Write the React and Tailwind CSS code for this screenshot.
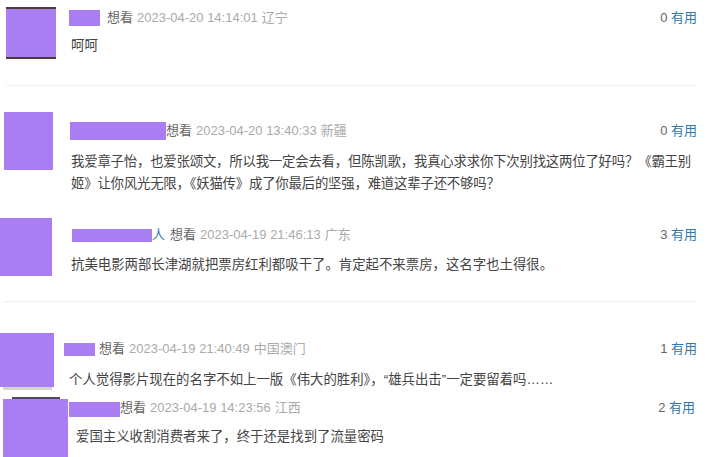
import React from "react";

const font = { fontFamily: '"Liberation Sans", "Noto Sans CJK SC", sans-serif' };

function Count({ n }) {
  return (
    <span className="text-[13px] leading-[20px] whitespace-nowrap">
      <span className="text-[#666]">{n}</span> <span className="text-[#3377aa]">有用</span>
    </span>
  );
}

function Meta({ date, loc }) {
  return (
    <>
      <span className="text-[#666]">想看</span>
      <span className="ml-[4px] text-[#aaa]">{date}</span>
      <span className="ml-[4px] text-[#aaa]">{loc}</span>
    </>
  );
}

export default function App() {
  return (
    <div className="w-[718px] h-[457px] bg-white overflow-hidden" style={font}>
      {/* Block 1 */}
      <div className="h-[105px] pt-[7px]">
        <div className="flex pl-[6px]">
          <div className="w-[50px] h-[52px] bg-[#a97ef2] border-t-2 border-b-2 border-[#4b3b3b] shrink-0" />
          <div className="ml-[13px] w-[628px] pt-[1px]">
            <div className="flex items-center justify-between text-[13px] leading-[20px]">
              <div className="flex items-center">
                <span className="w-[31px] h-[16px] bg-[#a97ef2] mr-[7px]" />
                <Meta date="2023-04-20 14:14:01" loc="辽宁" />
              </div>
              <Count n="0" />
            </div>
            <div className="mt-[8px] text-[13.4px] leading-[20px] text-[#444] pl-[2px]">呵呵</div>
          </div>
        </div>
        <div className="mt-[26px] ml-[6px] w-[691px] h-[1px] bg-[#efefef]" />
      </div>

      {/* Block 2 */}
      <div className="h-[105px] pt-[7px]">
        <div className="flex pl-[4px]">
          <div className="w-[49px] h-[58px] bg-[#a97ef2] shrink-0" />
          <div className="ml-[17px] w-[627px] pt-[9px]">
            <div className="flex items-center justify-between text-[13px] leading-[20px]">
              <div className="flex items-center">
                <span className="w-[96px] h-[18px] bg-[#a97ef2]" />
                <Meta date="2023-04-20 13:40:33" loc="新疆" />
              </div>
              <Count n="0" />
            </div>
            <div className="mt-[10px] text-[13.4px] leading-[22px] tracking-[-0.2px] text-[#444] pl-[1px] whitespace-nowrap">
              我爱章子怡，也爱张颂文，所以我一定会去看，但陈凯歌，我真心求求你下次别找这两位了好吗？《霸王别
              <br />
              姬》让你风光无限，《妖猫传》成了你最后的坚强，难道这辈子还不够吗？
            </div>
          </div>
        </div>
      </div>

      {/* Block 3 */}
      <div className="h-[110px] pt-[8px]">
        <div className="flex">
          <div className="w-[52px] h-[58px] bg-[#a97ef2] shrink-0" />
          <div className="ml-[16px] w-[629px] pt-[7px]">
            <div className="flex items-center justify-between text-[13px] leading-[20px]">
              <div className="flex items-center">
                <span className="ml-[4px] w-[80px] h-[13px] bg-[#a97ef2]" />
                <span className="text-[#3377aa] mr-[5px]">人</span>
                <Meta date="2023-04-19 21:46:13" loc="广东" />
              </div>
              <Count n="3" />
            </div>
            <div className="mt-[10px] text-[13.4px] leading-[20px] text-[#444] pl-[3px]">
              抗美电影两部长津湖就把票房红利都吸干了。肯定起不来票房，这名字也土得很。
            </div>
          </div>
        </div>
        <div className="mt-[25px] ml-[3px] w-[694px] h-[1px] bg-[#efefef]" />
      </div>

      {/* Block 4 */}
      <div className="h-[77px] pt-[13px]">
        <div className="flex">
          <div className="shrink-0">
            <div className="w-[54px] h-[54px] bg-[#a97ef2]" />
            <div className="ml-[3px] w-[49px] h-[3px] bg-[#d4d4d4]" />
          </div>
          <div className="ml-[10px] w-[633px] pt-[6px]">
            <div className="flex items-center justify-between text-[13px] leading-[20px]">
              <div className="flex items-center">
                <span className="w-[31px] h-[13px] bg-[#a97ef2] mr-[4px]" />
                <Meta date="2023-04-19 21:40:49" loc="中国澳门" />
              </div>
              <Count n="1" />
            </div>
            <div className="mt-[11px] text-[13.4px] leading-[20px] text-[#444] pl-[5px]">
              个人觉得影片现在的名字不如上一版《伟大的胜利》，“雄兵出击”一定要留着吗……
            </div>
          </div>
        </div>
      </div>

      {/* Block 5 */}
      <div className="h-[60px] pt-[1px]">
        <div className="flex pl-[3px]">
          <div className="relative w-[65px] h-[59px] mt-[1px] bg-[#a97ef2] shrink-0">
            <div className="absolute left-[9px] -top-[2px] w-[48px] h-[2px] bg-[#4b4b55]" />
          </div>
          <div className="ml-[1px] w-[626px]">
            <div className="flex items-center justify-between text-[13px] leading-[20px]">
              <div className="flex items-center">
                <span className="w-[51px] h-[15px] mt-[3px] bg-[#a97ef2]" />
                <Meta date="2023-04-19 14:23:56" loc="江西" />
              </div>
              <Count n="2" />
            </div>
            <div className="mt-[9px] text-[13.4px] leading-[20px] text-[#444] pl-[7px]">
              爱国主义收割消费者来了，终于还是找到了流量密码
            </div>
          </div>
        </div>
      </div>
    </div>
  );
}
